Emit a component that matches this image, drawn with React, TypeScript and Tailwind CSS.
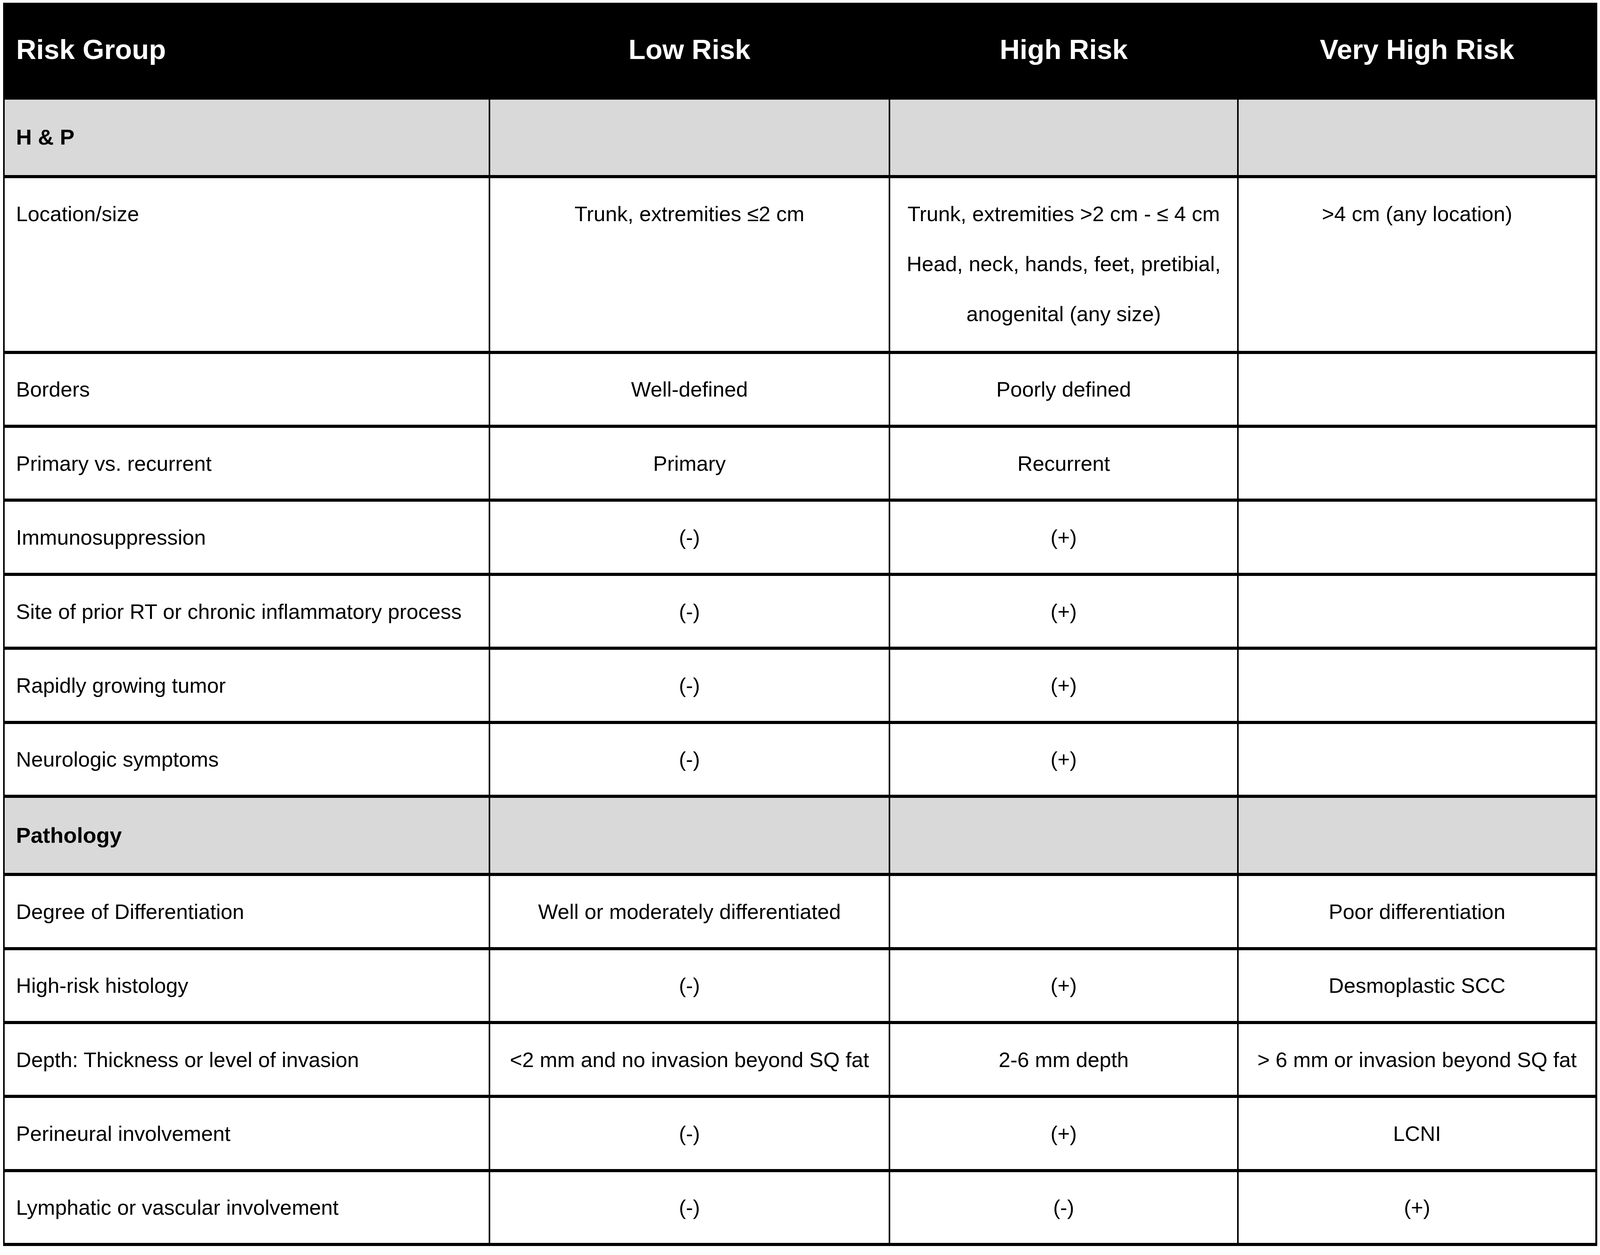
import React from "react"

// Full-window table: widths follow vw, row heights follow vh, so the grid fills the frame.

type Row =
  | { kind: "section"; label: string }
  | { kind: "data"; label: string; cells: (string | string[])[] }

const rows: Row[] = [
  { kind: "section", label: "H & P" },
  {
    kind: "data",
    label: "Location/size",
    cells: [
      "Trunk, extremities ≤2 cm",
      ["Trunk, extremities >2 cm - ≤ 4 cm", "Head, neck, hands, feet, pretibial,", "anogenital (any size)"],
      ">4 cm (any location)",
    ],
  },
  { kind: "data", label: "Borders", cells: ["Well-defined", "Poorly defined", ""] },
  { kind: "data", label: "Primary vs. recurrent", cells: ["Primary", "Recurrent", ""] },
  { kind: "data", label: "Immunosuppression", cells: ["(-)", "(+)", ""] },
  { kind: "data", label: "Site of prior RT or chronic inflammatory process", cells: ["(-)", "(+)", ""] },
  { kind: "data", label: "Rapidly growing tumor", cells: ["(-)", "(+)", ""] },
  { kind: "data", label: "Neurologic symptoms", cells: ["(-)", "(+)", ""] },
  { kind: "section", label: "Pathology" },
  { kind: "data", label: "Degree of Differentiation", cells: ["Well or moderately differentiated", "", "Poor differentiation"] },
  { kind: "data", label: "High-risk histology", cells: ["(-)", "(+)", "Desmoplastic SCC"] },
  {
    kind: "data",
    label: "Depth: Thickness or level of invasion",
    cells: ["<2 mm and no invasion beyond SQ fat", "2-6 mm depth", "> 6 mm or invasion beyond SQ fat"],
  },
  { kind: "data", label: "Perineural involvement", cells: ["(-)", "(+)", "LCNI"] },
  { kind: "data", label: "Lymphatic or vascular involvement", cells: ["(-)", "(-)", "(+)"] },
]

const headers = ["Low Risk", "High Risk", "Very High Risk"]

// one text line, a fixed slot of the row height
function Line({ children }: { children: React.ReactNode }) {
  return <div className="flex h-[3.985vh] items-center justify-center whitespace-nowrap">{children}</div>
}

function Cell({ value }: { value: string | string[] }) {
  const lines = Array.isArray(value) ? value : value ? [value] : []
  return (
    <div className="flex flex-col bg-white pt-[0.84vh] text-center text-[1.318vw] leading-[1.622vw]">
      {lines.map((l) => (
        <Line key={l}>{l}</Line>
      ))}
    </div>
  )
}

export default function App() {
  return (
    <div className="h-screen bg-white pl-[0.19vw] pt-[0.218vh] font-['Liberation_Sans',Arial,sans-serif] text-black">
      <div className="grid h-[99.07vh] w-[99.63vw] grid-cols-[2386fr_1966fr_1709fr_1760fr] grid-rows-[232fr_192fr_441fr_181fr_181fr_181fr_181fr_181fr_181fr_192fr_181fr_181fr_181fr_181fr_181fr] gap-x-[0.1014vw] gap-y-[0.249vh] bg-black px-[0.1014vw] py-[0.249vh]">
        {/* header */}
        <div className="flex items-center bg-black pb-[0.3vh] pl-[0.722vw] text-[1.736vw] font-bold leading-[2.028vw] text-white">
          Risk Group
        </div>
        {headers.map((h) => (
          <div
            key={h}
            className="flex items-center justify-center bg-black pb-[0.3vh] text-[1.736vw] font-bold leading-[2.028vw] text-white"
          >
            {h}
          </div>
        ))}

        {rows.map((row, i) => {
          if (row.kind === "section") {
            return (
              <React.Fragment key={i}>
                <div className="flex items-center bg-[#d9d9d9] pl-[0.71vw] text-[1.369vw] font-bold leading-[1.622vw]">
                  {row.label}
                </div>
                <div className="bg-[#d9d9d9]" />
                <div className="bg-[#d9d9d9]" />
                <div className="bg-[#d9d9d9]" />
              </React.Fragment>
            )
          }
          return (
            <React.Fragment key={i}>
              <div className="flex flex-col bg-white pl-[0.71vw] pt-[0.84vh] text-[1.318vw] leading-[1.622vw]">
                <div className="flex h-[3.985vh] items-center whitespace-nowrap">{row.label}</div>
              </div>
              {row.cells.map((c, j) => (
                <Cell key={j} value={c} />
              ))}
            </React.Fragment>
          )
        })}
      </div>
    </div>
  )
}
